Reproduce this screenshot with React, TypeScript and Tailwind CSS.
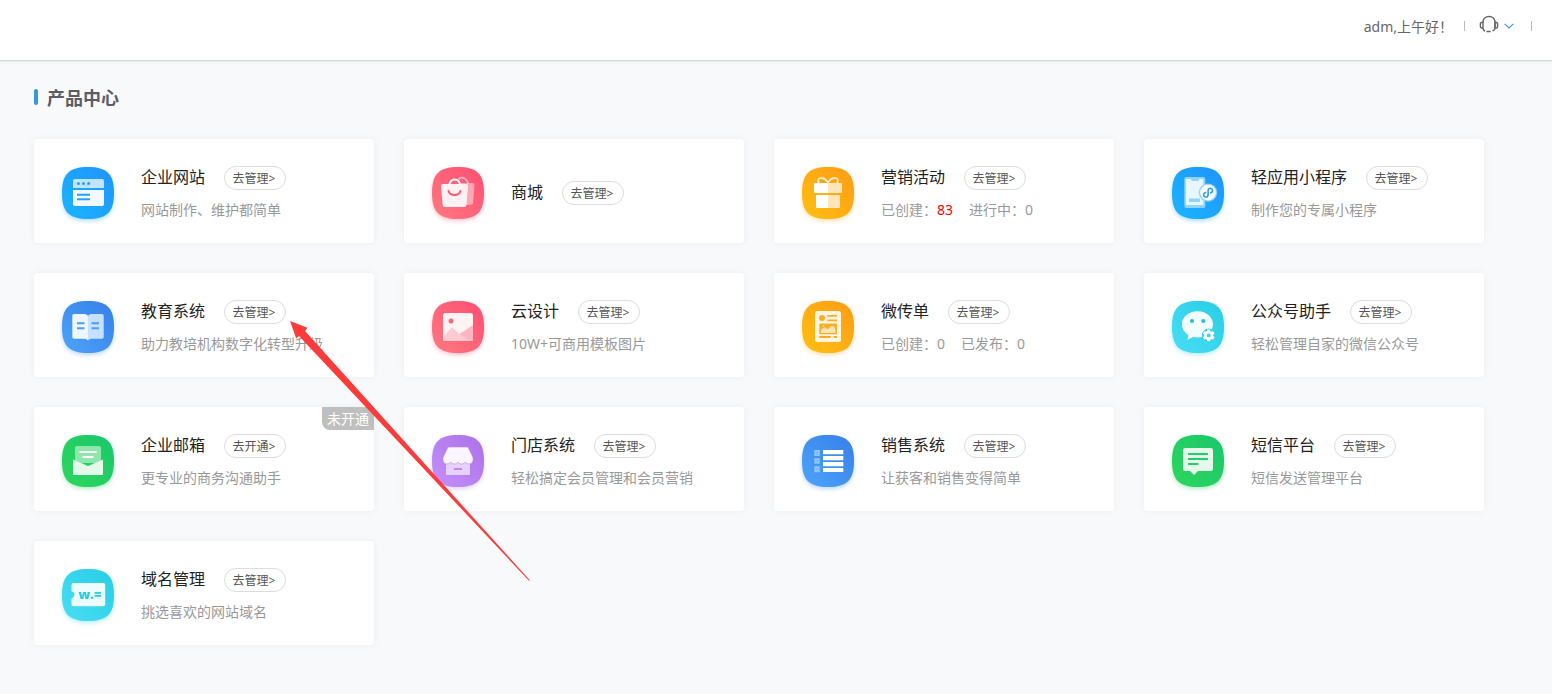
import type { ReactNode } from "react";

type Tone = "sky" | "pink" | "orange" | "blue" | "cyan" | "green" | "purple";

const tones: Record<Tone, { from: string; to: string; shadow: string }> = {
  sky: { from: "#1bb5ff", to: "#1f93ff", shadow: "drop-shadow-[0_2px_2px_rgba(30,160,255,0.35)]" },
  pink: { from: "#ff7a80", to: "#ff4d72", shadow: "drop-shadow-[0_2px_2px_rgba(255,90,120,0.35)]" },
  orange: { from: "#ffc011", to: "#ff9b15", shadow: "drop-shadow-[0_2px_2px_rgba(255,170,20,0.35)]" },
  blue: { from: "#4ca5f8", to: "#377ee9", shadow: "drop-shadow-[0_2px_2px_rgba(60,140,240,0.35)]" },
  cyan: { from: "#48def5", to: "#29cde6", shadow: "drop-shadow-[0_2px_2px_rgba(50,210,235,0.35)]" },
  green: { from: "#2fd65c", to: "#19c76c", shadow: "drop-shadow-[0_2px_2px_rgba(35,205,100,0.35)]" },
  purple: { from: "#c48ffa", to: "#ab72e6", shadow: "drop-shadow-[0_2px_2px_rgba(180,125,240,0.35)]" },
};

const glyphs: Record<string, ReactNode> = {
  site: (
    <>
      <path d="M13 12h27a2 2 0 0 1 2 2v7H11v-7a2 2 0 0 1 2-2z" fill="#fff" opacity=".72" />
      <path d="M11 23h31v14a2 2 0 0 1-2 2H13a2 2 0 0 1-2-2z" fill="#f3faff" />
      <g fill="#1f9fff"><circle cx="16.4" cy="16.6" r="1.5" /><circle cx="21.5" cy="16.6" r="1.5" /><circle cx="26.6" cy="16.6" r="1.5" /></g>
      <path d="M15 27.7h13M15 32.3h13" stroke="#1fa5ff" strokeWidth="2" />
    </>
  ),
  shop: (
    <>
      <path d="M27 16h13.500a2 2 0 0 1 2 2.200L41 36a2 2 0 0 1-2 1.800H27z" fill="#fff" opacity=".45" />
      <path d="M26.500 12c4-3 9 0 9.600 5" fill="none" stroke="#fff" strokeWidth="1.800" opacity=".5" />
      <path d="M11 17h23a2 2 0 0 1 2 2.200l-1.500 18.500a2.400 2.400 0 0 1-2.400 2.300H13a2.400 2.400 0 0 1-2.400-2.300L9 19.200A2 2 0 0 1 11 17z" fill="#fff1f3" />
      <path d="M17.500 18.500c0-8 10.500-8 10.500 0" fill="none" stroke="#fff" strokeWidth="2.200" />
      <path d="M16.600 24c1 5.300 10.800 5.300 11.800 0" fill="none" stroke="#ff5b76" strokeWidth="2" strokeLinecap="round" />
    </>
  ),
  gift: (
    <>
      <path d="M26 15.500c-3-5-8.500-5.800-9.700-2.600-.5 1.400.2 2.600 1.200 3.200M26 15.500c3-5 8.500-5.800 9.700-2.600.5 1.400-.2 2.600-1.200 3.200" fill="none" stroke="#fff1d8" strokeWidth="1.600" />
      <path d="M13.200 16H26v10H13.200a1.200 1.200 0 0 1-1.200-1.200v-7.600a1.200 1.200 0 0 1 1.200-1.200zM14 28h12v13H15.200a1.200 1.200 0 0 1-1.200-1.200z" fill="#fff" />
      <path d="M26 16h12.800a1.200 1.200 0 0 1 1.200 1.200v7.600a1.200 1.200 0 0 1-1.200 1.200H26zM26 28h12v11.800a1.200 1.200 0 0 1-1.200 1.200H26z" fill="#ffe6ba" />
    </>
  ),
  mini: (
    <>
      <rect x="12.300" y="10" width="21" height="31" rx="2" fill="#8fd4ff" />
      <path d="M14.800 12h4l1 2h6.500l1-2h4v26H14.800a1 1 0 0 1-1-1V13a1 1 0 0 1 1-1z" fill="#e8f6ff" />
      <rect x="17" y="31.500" width="11" height="3.500" fill="#8fd4ff" />
      <circle cx="36" cy="25.600" r="9.200" fill="#8fd4ff" />
      <circle cx="36" cy="25.600" r="7.800" fill="#fff" />
      <path d="M33.600 25.400c-2.900.8-2.500 4.600.4 4.600 1.400 0 2.100-1 2.100-2.300v-4.100c0-1.300.7-2.300 2.100-2.300 2.800 0 3.200 3.800.3 4.600" fill="none" stroke="#2ba1f5" strokeWidth="1.600" strokeLinecap="round" />
    </>
  ),
  book: (
    <>
      <path d="M12 13h10c2 0 3.500.7 4 2v24.500c-1-1.300-2.300-1.800-4.500-1.800H12a1.700 1.700 0 0 1-1.700-1.700V14.700A1.700 1.700 0 0 1 12 13z" fill="#eef7ff" />
      <path d="M40 13H30c-2 0-3.500.7-4 2v24.500c1-1.300 2.300-1.800 4.500-1.800H40a1.700 1.700 0 0 0 1.700-1.700V14.700A1.700 1.700 0 0 0 40 13z" fill="#c4e1ff" />
      <path d="M15 22.300h7.500M15 27.200h7.500M29.500 22.300H37M29.500 27.200H37" stroke="#4b9df6" strokeWidth="1.900" />
    </>
  ),
  picture: (
    <>
      <rect x="11" y="12" width="30" height="28" rx="2.500" fill="#fff3f4" />
      <circle cx="19" cy="20" r="2.500" fill="#ff667a" />
      <path d="M11 36.500 20 26.300l7.500 7L41 40H13.500a2.500 2.500 0 0 1-2.500-2.500z" fill="#ffcbd2" />
      <path d="M25.500 34.500 41 24v13.500a2.500 2.500 0 0 1-2.500 2.500h-6z" fill="#ffb6c1" />
      <path d="M13 39.900h26L26 33l-5 3z" fill="#ffcbd2" />
    </>
  ),
  flyer: (
    <>
      <rect x="13" y="10" width="26" height="31" rx="2.500" fill="#fff5e3" />
      <circle cx="20" cy="16.900" r="3" fill="#ffac24" />
      <path d="M25.300 14.800H35M25.300 19.400H35M17.300 36h11.500M31.500 36H35" stroke="#ffac24" strokeWidth="1.800" />
      <rect x="17.300" y="22.600" width="17.700" height="10.700" rx="1" fill="#ffac24" />
      <path d="m18.800 32 .2-3.500 3.500-2.200 3.500 2 3-3.300h2.500l2 3v4z" fill="#ffe4b4" />
      <circle cx="21.500" cy="25" r="1" fill="#ffe4b4" />
    </>
  ),
  wechat: (
    <>
      <path d="M25.500 10.200c-8.800 0-15.600 5.800-15.600 13 0 4.700 2.700 8.300 6.400 10.700L15.300 39l5.700-3c1.500.3 3 .4 4.500.4 8.700 0 15.500-5.900 15.500-13.200s-6.800-13-15.500-13z" fill="#f1fdff" />
      <circle cx="20" cy="20" r="2.100" fill="#28bcd5" />
      <circle cx="31.300" cy="20" r="2.100" fill="#28bcd5" />
      <circle cx="36.700" cy="34.400" r="6.800" fill="#34d3eb" />
      <circle cx="36.700" cy="34.400" r="3.300" fill="none" stroke="#fff" strokeWidth="2.700" />
      <path d="M36.700 28.500v2M36.700 38.300v2M31.600 31.400l1.700 1M40.100 36.400l1.700 1M31.600 37.400l1.700-1M40.100 32.400l1.700-1" stroke="#fff" strokeWidth="3" />
    </>
  ),
  mail: (
    <>
      <path d="M15 11h22a2 2 0 0 1 2 2v15H13V13a2 2 0 0 1 2-2z" fill="#8fe5ac" />
      <path d="M17.500 17h17M20.500 22h11" stroke="#fff" strokeWidth="1.800" />
      <path d="M11 24.500 26 31l15-6.500V39a1 1 0 0 1-1 1H12a1 1 0 0 1-1-1z" fill="#e4f9ea" />
    </>
  ),
  store: (
    <>
      <path d="M14 27h24v12a1 1 0 0 1-1 1H15a1 1 0 0 1-1-1z" fill="#e7d2ff" />
      <path d="M15.500 13c.3-.7.700-1 1.500-1h18c.8 0 1.200.3 1.500 1L41 22.500c.5 4.700-1.500 6.500-4 6.500-1.700 0-3-.8-3.700-2.100-.8 1.300-2.100 2.100-3.700 2.100-1.500 0-2.900-.8-3.600-2.100-.8 1.300-2.100 2.100-3.700 2.100s-2.900-.8-3.600-2.100C18 28.200 16.700 29 15 29c-2.500 0-4.500-1.800-4-6.500z" fill="#faf5ff" stroke="#b980ee" strokeWidth=".6" />
      <path d="M22 34h8" stroke="#b67eec" strokeWidth="1.800" />
    </>
  ),
  list: (
    <>
      <path d="M12.300 15h5.500v6h-5.500zM12.300 23.300h5.500v5.500h-5.500zM12.300 31.300h5.500v6h-5.500z" fill="#8fc3ff" />
      <path d="M14.300 18h1.500M14.300 26h1.500M14.300 34.300h1.500" stroke="#74b4fb" strokeWidth="1.500" />
      <path d="M21 17.200h20.300M21 23.200h20.300M21 29.100h20.300M21 35h20.300" stroke="#fff" strokeWidth="4.200" />
    </>
  ),
  sms: (
    <>
      <path d="M13.300 13h25.400a2.300 2.300 0 0 1 2.300 2.300v18.400a2.300 2.300 0 0 1-2.300 2.300H26l-4 4-4-4h-4.700a2.300 2.300 0 0 1-2.300-2.300V15.300a2.300 2.300 0 0 1 2.300-2.300z" fill="#e5faec" />
      <path d="M16 19h20M16 24h20M16 29h10.500" stroke="#27cd65" strokeWidth="1.900" />
    </>
  ),
  domain: (
    <>
      <path d="M11.500 14h29.700a2 2 0 0 1 2 2v19.200a2 2 0 0 1-2 2H11.500a2 2 0 0 1-2-2v-5.800a3.700 3.700 0 0 0 0-7.200V16a2 2 0 0 1 2-2z" fill="#ecfcff" />
      <text x="28" y="30" textAnchor="middle" fontFamily="Open Sans, Noto Sans, sans-serif" fontSize="13" fontWeight="800" fill="#2bcbe3">w.=</text>
    </>
  ),
};

type Product = {
  name: string;
  tone: Tone;
  glyph: string;
  desc?: string;
  stats?: { label: string; value: number; alert?: boolean }[];
  action?: string;
  badge?: string;
};

const products: Product[] = [
  { name: "企业网站", tone: "sky", glyph: "site", desc: "网站制作、维护都简单" },
  { name: "商城", tone: "pink", glyph: "shop" },
  { name: "营销活动", tone: "orange", glyph: "gift", stats: [{ label: "已创建", value: 83, alert: true }, { label: "进行中", value: 0 }] },
  { name: "轻应用小程序", tone: "sky", glyph: "mini", desc: "制作您的专属小程序" },
  { name: "教育系统", tone: "blue", glyph: "book", desc: "助力教培机构数字化转型升级" },
  { name: "云设计", tone: "pink", glyph: "picture", desc: "10W+可商用模板图片" },
  { name: "微传单", tone: "orange", glyph: "flyer", stats: [{ label: "已创建", value: 0 }, { label: "已发布", value: 0 }] },
  { name: "公众号助手", tone: "cyan", glyph: "wechat", desc: "轻松管理自家的微信公众号" },
  { name: "企业邮箱", tone: "green", glyph: "mail", desc: "更专业的商务沟通助手", action: "去开通", badge: "未开通" },
  { name: "门店系统", tone: "purple", glyph: "store", desc: "轻松搞定会员管理和会员营销" },
  { name: "销售系统", tone: "blue", glyph: "list", desc: "让获客和销售变得简单" },
  { name: "短信平台", tone: "green", glyph: "sms", desc: "短信发送管理平台" },
  { name: "域名管理", tone: "cyan", glyph: "domain", desc: "挑选喜欢的网站域名" },
];

function ProductIcon({ tone, glyph }: { tone: Tone; glyph: string }) {
  const t = tones[tone];
  const id = `fill-${glyph}`;
  return (
    <svg viewBox="0 0 52 52" aria-hidden="true" className={`size-13 shrink-0 overflow-visible ${t.shadow}`}>
      <defs>
        <linearGradient id={id} x1="0" y1="1" x2="1" y2="0">
          <stop offset="0" stopColor={t.from} />
          <stop offset="1" stopColor={t.to} />
        </linearGradient>
      </defs>
      <path d="M26 0C45 0 52 7 52 26S45 52 26 52 0 45 0 26 7 0 26 0z" fill={`url(#${id})`} />
      {glyphs[glyph]}
    </svg>
  );
}

function ProductCard({ product }: { product: Product }) {
  const { name, tone, glyph, desc, stats, action = "去管理", badge } = product;
  return (
    <li className="relative flex h-[104px] items-center gap-[27px] rounded bg-white px-7 pt-1 shadow-[0_0_8px_rgba(0,0,0,0.05)]">
      <ProductIcon tone={tone} glyph={glyph} />
      <div className="flex flex-col gap-2.5 whitespace-nowrap">
        <div className="flex h-6 items-center gap-[19px]">
          <h2 className="pb-0.5 text-base leading-6 text-[#222]">{name}</h2>
          <a href="#" className="flex h-6 w-[62px] items-center justify-center rounded-full border border-[#dcdcdc] pt-0.5 pr-0.5 text-xs text-[#555]">
            {action}&gt;
          </a>
        </div>
        {desc && <p className="text-sm leading-5 text-[#999]">{desc}</p>}
        {stats && (
          <p className="flex gap-4 text-sm leading-5 text-[#999]">
            {stats.map((s) => (
              <span key={s.label}>
                {s.label}：<span className={s.alert ? "text-[#f00]" : ""}>{s.value}</span>
              </span>
            ))}
          </p>
        )}
      </div>
      {badge && (
        <span className="absolute top-0 right-0 rounded-bl-lg bg-[#bfbfbf] px-[5px] text-sm leading-[23px] text-white">{badge}</span>
      )}
    </li>
  );
}

export default function App() {
  return (
    <div className="relative min-h-screen bg-[#f7f9fb] font-['Noto_Sans','Noto_Sans_CJK_SC',sans-serif]">
      <header className="flex h-[61px] items-center justify-end border-b border-[#d4d6d9] bg-white pr-5 pb-2 shadow-[0_1px_2px_rgba(0,0,0,0.08)]">
        <span className="pt-0.5 text-sm text-[#666]">adm,上午好！</span>
        <span className="ml-[11px] h-2.5 w-px bg-[#bbb]" />
        <button type="button" aria-label="客服" className="mr-[17px] ml-3.5 flex items-center gap-[5px]">
          <svg viewBox="0 0 20 18" className="mb-1 h-[18px] w-5" fill="none" stroke="#666" strokeWidth="1.400" aria-hidden="true">
            <path d="M4 7.500C4 3.800 6.500 1.500 10 1.500s6 2.300 6 6V13c0 1.500-1 2.500-2.500 2.900" />
            <path d="M4 7.200c-1.700 0-2.600.6-2.600 1.600v2.600c0 1 .9 1.700 2.600 1.700zM16 7.200c1.700 0 2.600.6 2.600 1.600v2.600c0 1-.9 1.700-2.600 1.700zM4 13c0 1.700.8 2.600 2.200 3M7.500 16.500h4.200" />
          </svg>
          <svg viewBox="0 0 10 6" className="h-1.5 w-2.5" fill="none" stroke="#3399dd" strokeWidth="1.100" aria-hidden="true">
            <path d="m.6.800 4.400 4.200L9.400.8" />
          </svg>
        </button>
        <span className="h-2.5 w-px bg-[#bbb]" />
      </header>

      <main className="px-[34px] pt-[25px] pb-12">
        <h1 className="flex items-center gap-[9px] text-lg leading-6 font-bold text-[#5c5c66]">
          <span className="mb-0.5 h-4 w-1 rounded-sm bg-[#3398dc]" />
          产品中心
        </h1>
        <ul className="mt-[29px] grid grid-cols-[repeat(auto-fill,340px)] gap-[30px]">
          {products.map((p) => (
            <ProductCard key={p.name} product={p} />
          ))}
        </ul>
      </main>

      <svg viewBox="0 0 240 260" aria-hidden="true" className="pointer-events-none absolute top-[321px] left-[290px] h-[260px] w-[240px]">
        <path d="M0 0 17.500 6.700 15 10 239.800 259.300 239 259.800 9 15 6.200 17.500z" fill="#fc3b3b" />
      </svg>
    </div>
  );
}
